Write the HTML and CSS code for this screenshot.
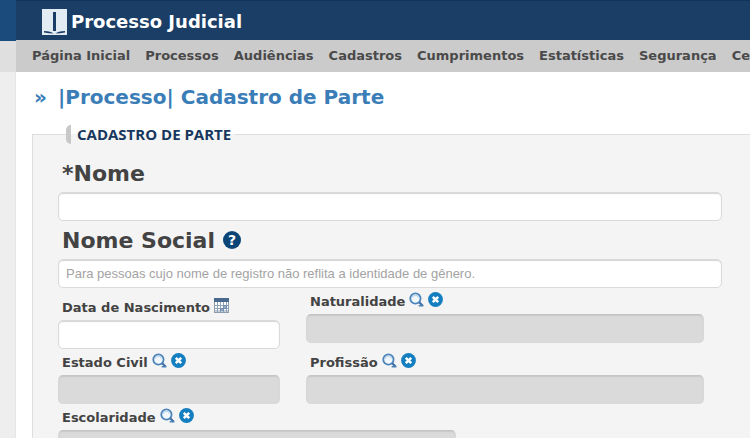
FILE: index.html
```html
<!DOCTYPE html>
<html lang="pt-BR">
  <head>
    <meta charset="UTF-8" />
    <meta name="viewport" content="width=device-width, initial-scale=1.0" />
    <title>Processo Judicial</title>
    <link rel="stylesheet" href="styles.css">
  </head>
  <body>
    <!-- shared icons -->
    <svg class="sprite" aria-hidden="true">
      <symbol id="search" viewBox="0 0 14 14">
        <circle cx="6" cy="6" r="4.8" fill="#f2f7fc" stroke="#4b83bb" stroke-width="1.7" />
        <path d="M3.2 5.2Q3.8 3 6 3T8.8 5.2" fill="none" stroke="#bcd3ea" stroke-width="1" />
        <path d="M9.5 9.5L12.8 12.8" stroke="#3f6fa5" stroke-width="2" />
        <path d="M9 12.800H13.500" stroke="#4b83bb" stroke-width="1.4" />
      </symbol>
      <symbol id="clear" viewBox="0 0 15 15">
        <circle cx="7.5" cy="7.5" r="7.4" fill="#147fc0" />
        <path d="M4.8 4.8L10.2 10.2M10.2 4.8L4.8 10.2" stroke="#fff" stroke-width="2.6" />
      </symbol>
    </svg>
    <div class="page">
      <div class="gutter">
        <div class="gutter-top"></div>
        <div class="gutter-nav"></div>
      </div>
      <div class="main">
        <header class="header">
          <svg class="logo" viewBox="0 0 25 26" aria-hidden="true">
            <rect width="25" height="26" fill="#e3ebf3" />
            <rect x="11" y="3" width="3" height="19" fill="#1a3e66" />
            <path d="M2 22Q9 22 11.500 24.500Q7 24.500 2 23.500zM23 22Q16 22 13.500 24.500Q18 24.500 23 23.500z" fill="#1a3e66" />
          </svg>
          <span class="brand">Processo Judicial</span>
        </header>
        <nav class="nav">
          <a href="#">Página Inicial</a>
          <a href="#">Processos</a>
          <a href="#">Audiências</a>
          <a href="#">Cadastros</a>
          <a href="#">Cumprimentos</a>
          <a href="#">Estatísticas</a>
          <a href="#">Segurança</a>
          <a href="#">Ce</a>
        </nav>
        <h1 class="title"><span class="arrows">»</span>|Processo| Cadastro de Parte</h1>
        <form class="form">
          <fieldset>
            <legend>CADASTRO DE PARTE</legend>
            <div class="field">
              <div class="label big"><label for="nome">*Nome</label></div>
              <input type="text" id="nome" />
            </div>
            <div class="field">
              <div class="label big">
                <label for="social">Nome Social</label>
                <button type="button" class="help" aria-label="Ajuda">?</button>
              </div>
              <input type="text" id="social" placeholder="Para pessoas cujo nome de registro não reflita a identidade de gênero." />
            </div>
            <div class="columns">
              <div class="field">
                <div class="label tall">
                  <label for="nascimento">Data de Nascimento</label>
                  <button type="button" class="icon" aria-label="Calendário">
                    <svg width="15" height="15" viewBox="0 0 15 15">
                      <rect x="0.500" y="0.500" width="14" height="14" fill="#fff" stroke="#8c9aa8" />
                      <rect width="15" height="4" fill="#496a8d" />
                      <path d="M3.500 4V15M6.500 4V15M9.500 4V15M12.500 4V15M0 7.500H15M0 10.500H15M0 13H15" stroke="#8fa4b8" />
                      <path d="M9 7H13V11H9zM6 10H10V13H6z" fill="#6789aa" fill-opacity="0.7" />
                    </svg>
                  </button>
                </div>
                <input type="text" id="nascimento" />
              </div>
              <div class="field top">
                <div class="label">
                  <label for="naturalidade">Naturalidade</label>
                  <button type="button" class="icon" aria-label="Pesquisar"><svg width="15" height="15"><use href="#search" /></svg></button>
                  <button type="button" class="icon" aria-label="Limpar"><svg width="15" height="15"><use href="#clear" /></svg></button>
                </div>
                <input type="text" id="naturalidade" readonly />
              </div>
              <div class="field">
                <div class="label">
                  <label for="civil">Estado Civil</label>
                  <button type="button" class="icon" aria-label="Pesquisar"><svg width="15" height="15"><use href="#search" /></svg></button>
                  <button type="button" class="icon" aria-label="Limpar"><svg width="15" height="15"><use href="#clear" /></svg></button>
                </div>
                <input type="text" id="civil" readonly />
              </div>
              <div class="field">
                <div class="label">
                  <label for="profissao">Profissão</label>
                  <button type="button" class="icon" aria-label="Pesquisar"><svg width="15" height="15"><use href="#search" /></svg></button>
                  <button type="button" class="icon" aria-label="Limpar"><svg width="15" height="15"><use href="#clear" /></svg></button>
                </div>
                <input type="text" id="profissao" readonly />
              </div>
            </div>
            <div class="field medium">
              <div class="label">
                <label for="escolaridade">Escolaridade</label>
                <button type="button" class="icon" aria-label="Pesquisar"><svg width="15" height="15"><use href="#search" /></svg></button>
                <button type="button" class="icon" aria-label="Limpar"><svg width="15" height="15"><use href="#clear" /></svg></button>
              </div>
              <input type="text" id="escolaridade" readonly />
            </div>
          </fieldset>
        </form>
      </div>
    </div>
  </body>
</html>
```

FILE: styles.css
```css
::-webkit-scrollbar {
  width: 0;
  height: 0;
}
* {
  box-sizing: border-box;
  padding: 0;
  margin: 0;
}
body {
  font-family: Verdana, "DejaVu Sans", sans-serif;
  font-size: 13px;
  font-weight: bold;
  color: #434343;
  background-color: #fff;
}
.sprite {
  display: none;
}
.page {
  display: flex;
  min-height: 100vh;
}
.gutter {
  flex: 0 0 16px;
  background-color: #eee;
  border-right: solid 1px #e6e6e6;
}
.gutter-top {
  height: 41px;
  margin-right: -1px;
  background-color: #1b4b7c;
}
.gutter-nav {
  height: 31px;
  margin-right: -1px;
  background-color: #dfdfdf;
}
.main {
  flex: 1;
  min-width: 0;
  overflow: hidden;
}
.header {
  display: flex;
  align-items: center;
  gap: 4px;
  height: 40px;
  padding: 2px 0 0 26px;
  background-color: #1a3e66;
  border-top: solid 1px #13335a;
}
.logo {
  width: 25px;
  height: 26px;
}
.brand {
  font-size: 18px;
  color: #fff;
}
.nav {
  display: flex;
  align-items: center;
  gap: 15px;
  height: 32px;
  padding: 0 0 2px 16px;
  background-color: #cbcbcb;
}
.nav a {
  color: #4a4a4a;
  text-decoration: none;
  white-space: nowrap;
}
.title {
  display: flex;
  gap: 11px;
  padding: 12px 0 0 18px;
  font-size: 20px;
  line-height: 26px;
  color: #3a7db7;
}
.form {
  padding: 15px 0 0 16px;
}
fieldset {
  min-width: 0;
  padding: 10px 28px 12px 25px;
  background-color: #f4f4f4;
  border: solid 1px #dedede;
  border-right: 0;
}
legend {
  margin-left: 8px;
  padding: 0 4px 0 6px;
  font-family: "Open Sans", sans-serif;
  font-size: 15px;
  line-height: 19px;
  color: #17375e;
  border-left: solid 5px #c8c8c8;
  border-radius: 5px 0 0 5px;
}
.field {
  display: flex;
  flex-direction: column;
}
.label {
  display: flex;
  align-items: center;
  gap: 4px;
  height: 26px;
  padding-left: 4px;
}
.label.big {
  gap: 8px;
  height: 38px;
  font-size: 22px;
}
.label.tall {
  height: 32px;
  padding-top: 6px;
}
input {
  width: 100%;
  height: 29px;
  padding: 0 7px;
  font-family: "Liberation Sans", Arial, sans-serif;
  font-size: 13px;
  color: #444;
  background-color: #fff;
  border: solid 1px #dadada;
  border-radius: 5px;
  box-shadow: inset 0 1px 1px #d4d4d4;
}
input::placeholder {
  color: #a3a3a3;
}
input:read-only {
  background-color: #dadada;
  border-color: #c4c4c4 #d8d8d8 #d8d8d8;
  box-shadow: inset 0 1px 1px #c8c8c8;
}
button {
  border: 0;
  background: none;
}
.help {
  width: 18px;
  height: 18px;
  font-family: "DejaVu Sans", sans-serif;
  font-size: 14px;
  font-weight: bold;
  line-height: 18px;
  color: #fff;
  background-color: #0b4578;
  border-radius: 50%;
}
.icon {
  width: 15px;
  height: 15px;
  margin-bottom: 4px;
}
.icon svg {
  display: block;
}
.columns {
  display: grid;
  grid-template-columns: 222fr 398fr;
  column-gap: 26px;
  align-items: end;
  margin-right: 18px;
}
.top {
  align-self: start;
}
.medium {
  width: 60%;
}
```
